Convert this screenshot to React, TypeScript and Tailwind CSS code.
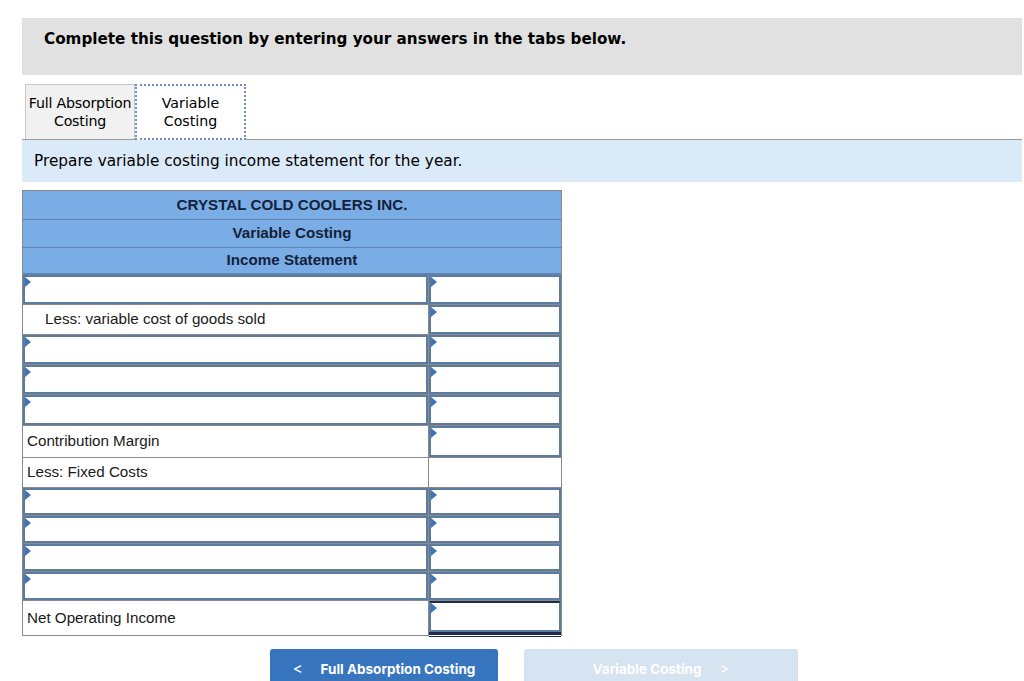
import React from 'react';

type Row =
    | { kind: 'input'; h: number; right: 'input' | 'none' }
    | { kind: 'label'; h: number; text: string; indent?: boolean; right: 'input' | 'none' | 'total' };

const rows: Row[] = [
    { kind: 'input', h: 30, right: 'input' },
    { kind: 'label', h: 30, text: 'Less: variable cost of goods sold', indent: true, right: 'input' },
    { kind: 'input', h: 30, right: 'input' },
    { kind: 'input', h: 30, right: 'input' },
    { kind: 'input', h: 31, right: 'input' },
    { kind: 'label', h: 32, text: 'Contribution Margin', right: 'input' },
    { kind: 'label', h: 30, text: 'Less: Fixed Costs', right: 'none' },
    { kind: 'input', h: 28, right: 'input' },
    { kind: 'input', h: 28, right: 'input' },
    { kind: 'input', h: 28, right: 'input' },
    { kind: 'input', h: 29, right: 'input' },
    { kind: 'label', h: 34, text: 'Net Operating Income', right: 'total' },
];

const Marker = () => (
    <span className="absolute left-0 top-0 w-0 h-0 border-t-[5px] border-b-[5px] border-l-[6px] border-t-transparent border-b-transparent border-l-[#3f74b5]" />
);

const InputCell: React.FC<{ className?: string }> = ({ className = '' }) => (
    <div className={`relative h-full bg-white border-2 border-[#5b7ba0] ${className}`}>
        <Marker />
    </div>
);

const App: React.FC = () => {
    return (
        <div className="w-[1024px] h-[681px] bg-white overflow-hidden pt-[18px] pl-[22px]">
            <div className="w-[1000px] h-[57px] bg-[#e1e1e1] flex items-start pt-[10px] pl-[22px]">
                <span className="font-['DejaVu_Sans',sans-serif] font-bold text-[15.2px] text-black">
                    Complete this question by entering your answers in the tabs below.
                </span>
            </div>

            <div className="mt-[9px] w-[1000px] flex items-end border-b border-[#9a9a9a] pl-[3px]">
                <div className="w-[110px] h-[55px] bg-[#f1f1f1] border border-b-0 border-[#c8c8c8] flex items-center justify-center text-center leading-[18px] font-['DejaVu_Sans',sans-serif] text-[14.2px] text-black tracking-[-0.2px]">
                    Full Absorption<br />Costing
                </div>
                <div className="w-[111px] h-[56px] bg-white border-2 border-dotted border-[#6d8fb8] flex items-center justify-center text-center leading-[18px] font-['DejaVu_Sans',sans-serif] text-[14.2px] text-black -mb-px">
                    Variable<br />Costing
                </div>
            </div>

            <div className="w-[1000px] h-[42px] bg-[#dbeaf9] flex items-center pl-[12px]">
                <span className="font-['DejaVu_Sans',sans-serif] text-[15.3px] text-black">
                    Prepare variable costing income statement for the year.
                </span>
            </div>

            <div className="mt-[8px] w-[540px] border border-[#8a8a8a] font-['Liberation_Sans',Arial,sans-serif]">
                {['CRYSTAL COLD COOLERS INC.', 'Variable Costing', 'Income Statement'].map((t, i) => (
                    <div
                        key={t}
                        className={`h-[28px] bg-[#7aade5] flex items-center justify-center font-bold text-[15.2px] text-[#14213a] ${i > 0 ? 'border-t border-[#5f83ad]' : ''} ${i === 2 ? 'border-b-2 border-b-[#5f83ad]' : ''}`}
                    >
                        {t}
                    </div>
                ))}

                {rows.map((r, i) => (
                    <div key={i} className="flex border-b border-[#8a8a8a] last:border-b-0" style={{ height: r.h }}>
                        <div className="w-[406px] h-full border-r border-[#8a8a8a]">
                            {r.kind === 'input' ? (
                                <InputCell />
                            ) : (
                                <div className={`h-full flex items-center text-[15.2px] text-[#1a1a1a] ${r.indent ? 'pl-[22px]' : 'pl-[4px]'}`}>
                                    {r.text}
                                </div>
                            )}
                        </div>
                        <div className="flex-1 h-full">
                            {r.right === 'input' && <InputCell />}
                            {r.right === 'total' && (
                                <div className="h-full pb-[3px]">
                                    <div className="relative h-full bg-white border-2 border-[#5b7ba0] border-t-[#1f2d4a] shadow-[0_3px_0_0_#1f2d4a,0_4px_0_0_#fff,0_5px_0_0_#1f2d4a]">
                                        <Marker />
                                    </div>
                                </div>
                            )}
                        </div>
                    </div>
                ))}
            </div>

            <div className="mt-[13px] flex pl-[248px] gap-[26px] font-['Inter',sans-serif]">
                <button className="w-[228px] h-[40px] bg-[#3775bf] rounded-t-[3px] flex items-center justify-center gap-[18px] text-white font-bold text-[13.5px]">
                    <span className="text-[15px] font-normal">&lt;</span>
                    <span>Full Absorption Costing</span>
                </button>
                <button className="w-[274px] h-[40px] bg-[#d6e3f1] rounded-t-[3px] flex items-center justify-center gap-[18px] text-white font-bold text-[13.5px]">
                    <span>Variable Costing</span>
                    <span className="text-[15px] font-normal">&gt;</span>
                </button>
            </div>
        </div>
    );
};

export default App;
